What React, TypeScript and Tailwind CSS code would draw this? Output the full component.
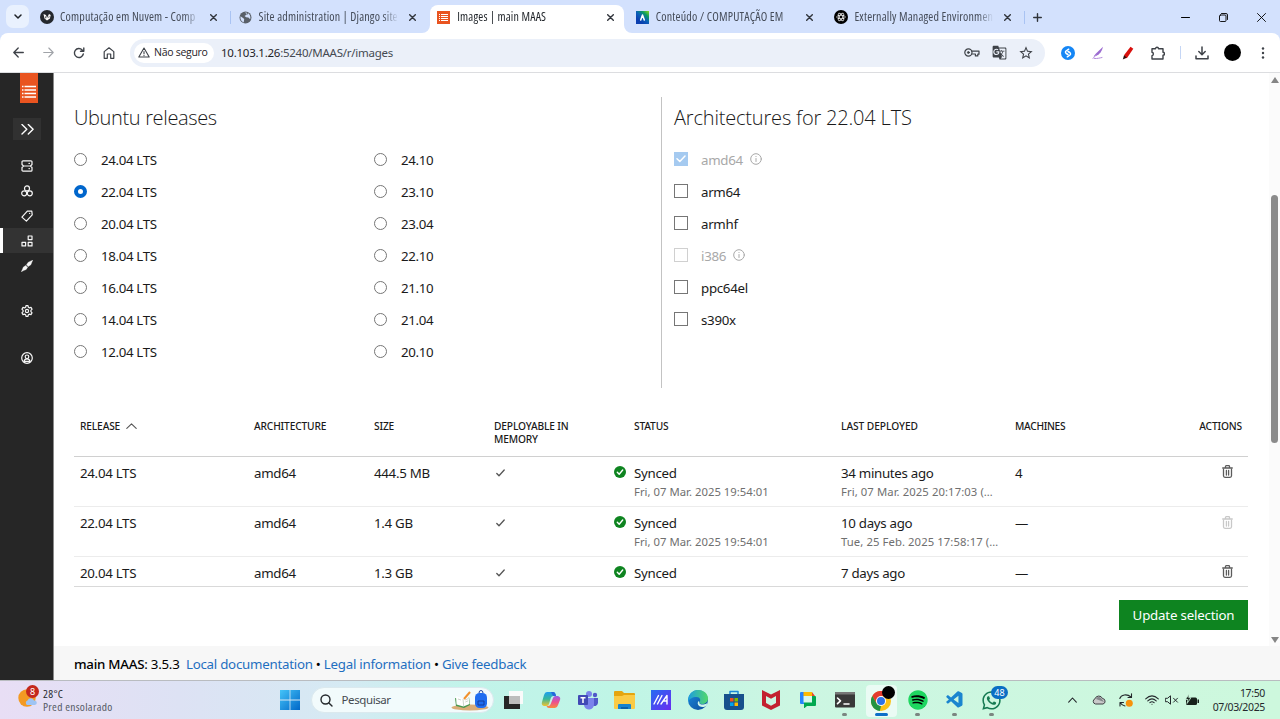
import React from "react";
import { FaSpotify, FaWhatsapp } from "react-icons/fa";
import { VscVscode } from "react-icons/vsc";
import { MdGTranslate, MdStarOutline } from "react-icons/md";

const ui = "font-['Noto_Sans',sans-serif]";
const stroke = { fill: "none", stroke: "currentColor", strokeLinecap: "round", strokeLinejoin: "round" } as const;

function Close() {
  return (
    <svg className="h-[7px] w-[7px] shrink-0 text-[#30343b]" viewBox="0 0 7 7" {...stroke} strokeWidth="1.4">
      <path d="M.7.7l5.6 5.6M6.3.7L.7 6.3" />
    </svg>
  );
}

function MaasMark() {
  return (
    <svg className="h-[13px] w-[13px]" viewBox="0 0 13 13">
      <path fill="#e95420" d="M0 0h13v13H0z" />
      <path stroke="#fff" strokeWidth="1" d="M2 3.5h1M4 3.5h7M2 5.5h1M4 5.5h7M2 7.5h1M4 7.5h7M2 9.5h1M4 9.5h7" />
    </svg>
  );
}

const favicons = [
  <svg className="h-[14px] w-[14px]" viewBox="0 0 14 14">
    <circle cx="7" cy="7" r="7" fill="#24282e" />
    <path fill="#fff" d="M3.500 4l2.500 1 1 3 2-4 1.700 1-.8 3.500L7 10.500 4.500 8.500z" />
    <path fill="#24282e" d="M5 5.500l1.500 2.500-1 .5zM9 6l.7 1-1.500 1z" />
  </svg>,
  <svg className="h-[13px] w-[13px]" viewBox="0 0 13 13">
    <circle cx="6.5" cy="6.5" r="6" fill="#596069" />
    <path fill="#d3e1fd" d="M1.5 5.2L4 7l1.2 1-.5 3.4C2.500 10.500 1 8.500 1.500 5.200zM6 1.500l2 .3-.6 1.900L5.600 5l1.500 1.300 2.200.200 1.900 1.700c.7-2.500-.4-5-2.500-6.200L9 3.600 7.500 3z" />
  </svg>,
  <MaasMark />,
  <svg className="h-[13px] w-[13px]" viewBox="0 0 13 13">
    <defs>
      <linearGradient id="av" x1="1" y1="0" x2="0.3" y2="0.8">
        <stop offset="0" stopColor="#8ddc1c" />
        <stop offset=".35" stopColor="#0b9a63" />
        <stop offset=".65" stopColor="#0a60b8" />
        <stop offset="1" stopColor="#0b3fb0" />
      </linearGradient>
    </defs>
    <path fill="url(#av)" d="M0 0h13v13H0z" />
    <path {...stroke} stroke="#fff" strokeWidth="1.500" d="M4.700 9l1.800-5 1.800 5" />
  </svg>,
  <svg className="h-[14px] w-[14px]" viewBox="0 0 14 14">
    <circle cx="7" cy="7" r="7" fill="#000" />
    <g fill="none" stroke="#fff" strokeWidth=".7">
      <ellipse cx="7" cy="7" rx="4.400" ry="1.800" />
      <ellipse cx="7" cy="7" rx="4.400" ry="1.800" transform="rotate(60 7 7)" />
      <ellipse cx="7" cy="7" rx="4.400" ry="1.800" transform="rotate(120 7 7)" />
    </g>
  </svg>,
];

const tabs = [
  "Computação em Nuvem - Comp",
  "Site administration | Django site",
  "Images | main MAAS",
  "Conteúdo / COMPUTAÇÃO EM",
  "Externally Managed Environmen",
];

function TabBar() {
  return (
    <div className="flex h-[33px] bg-[#d3e1fd]">
      <div className="flex w-[32px] shrink-0 items-center pl-[6px]">
        <div className="flex h-[23px] w-[23px] items-center justify-center rounded-[7px] bg-[#e9f1fe]">
          <svg className="h-[5px] w-[8px] text-[#1f2328]" viewBox="0 0 8 5" {...stroke} strokeWidth="1.500">
            <path d="M1 1l3 3 3-3" />
          </svg>
        </div>
      </div>
      {tabs.map((t, i) => (
        <div key={t} className="relative flex w-[198.6px] shrink-0 items-center pt-[1px]">
          {i === 2 && (
            <div className="absolute top-[5px] left-[-7px] flex h-[28px] w-[210px] items-end">
              <svg className="h-[8px] w-[8px] shrink-0" viewBox="0 0 8 8"><path fill="#fff" d="M8 0v8H0a8 8 0 0 0 8-8z" /></svg>
              <div className="h-full flex-1 rounded-t-[8px] bg-white" />
              <svg className="h-[8px] w-[8px] shrink-0" viewBox="0 0 8 8"><path fill="#fff" d="M0 0v8h8a8 8 0 0 1-8-8z" /></svg>
            </div>
          )}
          <div className="relative flex w-full items-center pl-[8px]">
            <span className="flex w-[20px] shrink-0">{favicons[i]}</span>
            <span
              className={
                "w-[141px] shrink-0 font-['Open_Sans',sans-serif] text-[12px] leading-[16px] tracking-[0.18px] whitespace-nowrap [font-stretch:86%] [mask-image:linear-gradient(to_right,black_88%,transparent_99%)] " +
                (i === 2 ? "text-[#1f2328]" : "text-[#454c59]")
              }
            >
              {t}
            </span>
            <span className="ml-[9px] flex"><Close /></span>
            {(i === 0 || i === 4) && <span className="ml-auto h-[13px] w-[1px] bg-[#a9c3f3]" />}
          </div>
        </div>
      ))}
      <div className="flex flex-1 items-center justify-between pt-[1px] pr-[14px] pl-[8px] text-[#30343b]">
        <svg className="h-[9px] w-[9px]" viewBox="0 0 9 9" {...stroke} strokeWidth="1.400"><path d="M4.500.7v7.600M.7 4.500h7.600" /></svg>
        <div className="flex items-center gap-[29px] text-black">
          <svg className="h-[9px] w-[9px]" viewBox="0 0 9 9" {...stroke} strokeWidth="1"><path d="M.5 4.500h8" /></svg>
          <svg className="h-[9px] w-[9px]" viewBox="0 0 9 9" {...stroke} strokeWidth=".9"><rect x=".5" y="2" width="6.500" height="6.500" rx="1" /><path d="M2.500.5h4.500a1.500 1.500 0 0 1 1.500 1.500v4.500" /></svg>
          <svg className="h-[9px] w-[9px]" viewBox="0 0 9 9" {...stroke} strokeWidth=".9"><path d="M.5.5l8 8M8.500.5l-8 8" /></svg>
        </div>
      </div>
    </div>
  );
}

function Toolbar() {
  return (
    <div className="bg-[#d3e1fd]">
      <div className="flex h-[40px] items-center rounded-t-[8px] border-b border-[#dcdde0] bg-white pl-[13px] text-[#3e4248]">
        <svg className="h-[11px] w-[11px]" viewBox="0 0 11 11" {...stroke} strokeWidth="1.300"><path d="M10.300 5.500H1M5.200 1L.8 5.500l4.400 4.500" /></svg>
        <svg className="ml-[19px] h-[11px] w-[11px] text-[#a0a3a8]" viewBox="0 0 11 11" {...stroke} strokeWidth="1.100"><path d="M.7 5.500H10M5.800 1l4.400 4.500L5.800 10" /></svg>
        <svg className="ml-[19px] h-[12px] w-[12px]" viewBox="0 0 12 12" {...stroke} strokeWidth="1.400"><path d="M10.300 7A4.500 4.500 0 1 1 9.200 2.900l1.300 1.300M10.800 1v3.300H7.500" /></svg>
        <svg className="ml-[18px] h-[12px] w-[12px]" viewBox="0 0 12 12" {...stroke} strokeWidth="1.200"><path d="M1.200 11.300V4.600L6 .8l4.800 3.800v6.700H7.700V7H4.300v4.300z" /></svg>
        <div className="ml-[15px] flex h-[28px] w-[915px] shrink-0 items-center rounded-full bg-[#ebf0f9] pr-[12px] pl-[4px]">
          <div className="flex h-[20px] w-[80px] items-center rounded-full bg-white pl-[4px]">
            <svg className="h-[11px] w-[12px] shrink-0" viewBox="0 0 12 11" {...stroke} strokeWidth="1.100"><path d="M6 1l5.200 9H.8zM6 4.500v2.300M6 8.300v.3" /></svg>
            <span className="ml-[4px] pt-px font-['Open_Sans',sans-serif] text-[10.500px] font-medium tracking-[-0.28px] whitespace-nowrap text-[#1f2328]">Não seguro</span>
          </div>
          <span className="ml-[7px] pt-px text-[11.500px] tracking-[-0.250px] whitespace-nowrap text-[#454a52]"><span className="text-[#1f2328]">10.103.1.26</span>:5240/MAAS/r/images</span>
          <div className="ml-auto flex items-center gap-[11px]">
            <svg className="mr-[1px] h-[9px] w-[16px]" viewBox="0 0 16 9" {...stroke} strokeWidth="1.200"><circle cx="4.400" cy="4.500" r="3.600" /><circle cx="4.400" cy="4.500" r="1" fill="currentColor" strokeWidth=".8" /><path d="M7.800 3.200H15v3h-1.200v1.700h-2.400V6H7.800" /></svg>
            <MdGTranslate className="h-[15px] w-[15px]" />
            <MdStarOutline className="h-[16px] w-[16px] -mr-[1px]" />
          </div>
        </div>
        <svg className="ml-[16px] h-[14px] w-[14px] shrink-0" viewBox="0 0 14 14"><circle cx="7" cy="7" r="7" fill="#1586f5" /><path {...stroke} stroke="#fff" strokeWidth="1.500" d="M7.700 3.200L5 5a1.600 1.600 0 0 0 .2 2.500L7 8.500M6.300 10.800L9 9a1.600 1.600 0 0 0-.2-2.500L7 5.500" /></svg>
        <svg className="ml-[17px] h-[14px] w-[12px] shrink-0" viewBox="0 0 12 14"><path fill="#9b6bd0" d="M11 .8L4 7.500l-2.500 3 3-.8C8 8 10 5 11 .8z" /><path {...stroke} stroke="#b38adc" strokeWidth="1" d="M1 12.500l3-3.500M2.500 12.500c3 .2 5-.5 7.500-1" /></svg>
        <svg className="ml-[18px] h-[14px] w-[12px] shrink-0" viewBox="0 0 12 14"><path fill="#d9100d" d="M8.500.8l2.800 2L5 12l-3 .5.200-3.500z" /><path fill="#251010" d="M2 9.300l2.700 2.200L.8 13.500z" /></svg>
        <svg className="ml-[17px] h-[14px] w-[14px] shrink-0" viewBox="0 0 14 14" {...stroke} strokeWidth="1.400"><path d="M1 2.800h3.500a1.500 1.500 0 0 1 3 0H12v3.500a1.500 1.500 0 0 1 0 3V13H1V9.700a1.800 1.800 0 0 0 0-3.500z" /></svg>
        <span className="ml-[15px] h-[13px] w-[1px] bg-[#c5d6f5]" />
        <svg className="ml-[14px] h-[14px] w-[14px] shrink-0" viewBox="0 0 14 14" {...stroke} strokeWidth="1.500"><path d="M7 1v7.500M3.800 5.500L7 8.700l3.200-3.200M1 10v2.700h12V10" /></svg>
        <span className="ml-[15px] h-[17px] w-[17px] shrink-0 rounded-full bg-black" />
        <svg className="ml-[20px] h-[12px] w-[4px] shrink-0" viewBox="0 0 4 12" fill="currentColor"><circle cx="2" cy="1.500" r="1.200" /><circle cx="2" cy="6" r="1.200" /><circle cx="2" cy="10.500" r="1.200" /></svg>
      </div>
    </div>
  );
}

const navIcons = [
  <path key="a" d="M2 .8h8a1 1 0 0 1 1 1v2.700L9.500 6H2.500L1 4.500V1.800a1 1 0 0 1 1-1zM2.500 6h7L11 7.500v2.700a1 1 0 0 1-1 1H2a1 1 0 0 1-1-1V7.500zM8 3.400h.4M8 8.600h.4" />,
  <g key="b"><circle cx="6" cy="3.400" r="2.500" /><circle cx="3.200" cy="8.300" r="2.500" /><circle cx="8.800" cy="8.300" r="2.500" /></g>,
  <path key="c" d="M6.300 1.200L10.800 1l.4 3.800-5.800 6.300L.9 7.100zM8.600 3.400h.1" />,
  <path key="d" d="M7.200 1h3.800v3.600H7.200zM1 7.300h3.600v3.600H1zM7.200 7.300h3.800v3.600H7.200z" />,
  <path key="e" fill="currentColor" d="M11.700.3L9.500 1.200 7 2.500 5.600 4.700l1.800 1.700 2.400-1.600 1-2.600zM4.800 5.500L2.400 7.100 1.400 9.500.3 11.700l2.200-1.100L5.200 9.400l1.400-2.200z" strokeWidth=".4" />,
];

function SideIcon({ children }: { children: React.ReactNode }) {
  return (
    <svg className="h-[12px] w-[12px] text-[#f7f7f7]" viewBox="0 0 12 12" {...stroke} strokeWidth="1.200">{children}</svg>
  );
}

function Sidebar() {
  return (
    <div className="flex w-[54px] shrink-0 flex-col border-r border-[#8a8a8a] bg-[#262626]">
      <div className="ml-[20px] flex h-[30px] w-[18px] items-end justify-center bg-[#e95420] pb-[4px]">
        <svg className="h-[14px] w-[14px]" viewBox="0 0 14 14"><path stroke="#fff" strokeWidth="1.500" d="M0 1.500h1.500M2.500 1.500H14M0 5h1.500M2.500 5H14M0 8.500h1.500M2.500 8.500H14M0 12h1.500M2.500 12H14" /></svg>
      </div>
      <div className="mt-[15px] ml-[13px] flex h-[22px] w-[28px] items-center justify-center bg-[#313131]">
        <svg className="h-[11px] w-[13px] text-white" viewBox="0 0 13 11" {...stroke} strokeWidth="1.400"><path d="M1 .5l4.800 4.700L1 9.900M7.300.5l4.800 4.700-4.800 4.700" /></svg>
      </div>
      <div className="mt-[13px]">
        {navIcons.map((ic, i) => (
          <div key={i} className={i === 3 ? "flex h-[25px] items-center border-l-[3px] border-white bg-[#333] pl-[18px]" : "flex h-[25px] items-center pl-[21px]"}>
            <SideIcon>{ic}</SideIcon>
          </div>
        ))}
      </div>
      <div className="mt-[27px] pl-[21px]">
        <SideIcon>
          <circle cx="6" cy="6" r="1.600" />
          <path d="M4.600 2.300L5 .7h2l.4 1.600 1 .6L10 2.400l1.100 1.800-1.200 1.200v1.200l1.200 1.200L10 9.600l-1.600-.5-1 .6L7 11.300H5l-.4-1.600-1-.6L2 9.600.9 7.800l1.200-1.200V5.400L.9 4.200 2 2.400l1.600.5z" />
        </SideIcon>
      </div>
      <div className="mt-[35px] pl-[21px]">
        <SideIcon><circle cx="6" cy="6" r="5.300" /><circle cx="6" cy="4.800" r="1.800" /><path d="M3 9.300c.3-1.600 1.500-2.500 3-2.500s2.700.9 3 2.500z" /></SideIcon>
      </div>
    </div>
  );
}

const leftReleases = ["24.04 LTS", "22.04 LTS", "20.04 LTS", "18.04 LTS", "16.04 LTS", "14.04 LTS", "12.04 LTS"];
const rightReleases = ["24.10", "23.10", "23.04", "22.10", "21.10", "21.04", "20.10"];

function Radio({ label }: { label: string }) {
  return (
    <div className="flex h-[32px] items-center">
      <span className={label === "22.04 LTS" ? "h-[13px] w-[13px] rounded-full border-[4px] border-[#0066cc] bg-white" : "h-[13px] w-[13px] rounded-full border border-[#767676] bg-white"} />
      <span className="ml-[14px] pt-[3px] text-[13.300px] tracking-[-0.35px]">{label}</span>
    </div>
  );
}

function Info() {
  return (
    <svg className="ml-[7px] h-[12px] w-[12px]" viewBox="0 0 12 12" {...stroke} strokeWidth="1"><circle cx="6" cy="6" r="5.300" /><path d="M6 5.500v3M6 3.400v.1" /></svg>
  );
}

function Arch({ label }: { label: string }) {
  const disabled = label === "amd64" || label === "i386";
  return (
    <div className={disabled ? "flex h-[32px] items-center text-[#a8a8a8]" : "flex h-[32px] items-center"}>
      {label === "amd64" ? (
        <span className="flex h-[14px] w-[14px] items-center justify-center bg-[#a5caf0]">
          <svg className="h-[8px] w-[10px] text-white" viewBox="0 0 10 8" {...stroke} strokeWidth="1.500"><path d="M1 3.800L3.800 6.500 9 1" /></svg>
        </span>
      ) : (
        <span className={disabled ? "h-[14px] w-[14px] border border-[#d0d0d0]" : "h-[14px] w-[14px] border border-[#767676]"} />
      )}
      <span className="ml-[13px] pt-[3px] text-[13.300px] tracking-[-0.3px]">{label}</span>
      {disabled && <Info />}
    </div>
  );
}

const cols = "grid grid-cols-[174px_120px_120px_140px_207px_174px_1fr_auto] pl-[6px]";

function Check() {
  return <svg className="mt-[6.500px] ml-[2px] h-[8px] w-[9px] text-[#555]" viewBox="0 0 9 8" {...stroke} strokeWidth="1.300"><path d="M.8 4.500L3 6.800 8.200 1" /></svg>;
}

function Trash() {
  return (
    <svg className="h-[13px] w-[11px]" viewBox="0 0 11 13" {...stroke} strokeWidth="1.300"><path d="M.7 3h9.600M3.500 3V1.500q0-.8.8-.8h2.400q.8 0 .8.800V3M1.500 4.500v6.300q0 1.500 1.500 1.500h5q1.500 0 1.500-1.500V4.500M4.400 5.500v4.500M6.600 5.500v4.500" /></svg>
  );
}

const rows = [
  { r: "24.04 LTS", s: "444.5 MB", d: "34 minutes ago", dd: "Fri, 07 Mar. 2025 20:17:03 (…", m: "4" },
  { r: "22.04 LTS", s: "1.4 GB", d: "10 days ago", dd: "Tue, 25 Feb. 2025 17:58:17 (…", m: "—" },
  { r: "20.04 LTS", s: "1.3 GB", d: "7 days ago", dd: "", m: "—" },
];

function ImagesTable() {
  return (
    <div className="h-[199px] overflow-hidden border-b border-[#d9d9d9] text-[13.300px] leading-[20px]">
      <div className={cols + " h-[69px] border-b border-[#d0d0d0] pt-[32px] text-[10.200px] leading-[13.300px] font-medium tracking-[-0.15px]"}>
        <span className="flex gap-[6px]">RELEASE<svg className="mt-[3px] h-[6px] w-[11px] text-[#555]" viewBox="0 0 11 6" {...stroke} strokeWidth="1.100"><path d="M.8 5.400L5.500.8l4.700 4.600" /></svg></span>
        <span>ARCHITECTURE</span>
        <span>SIZE</span>
        <span>DEPLOYABLE IN<br />MEMORY</span>
        <span>STATUS</span>
        <span className="tracking-[-0.05px]">LAST DEPLOYED</span>
        <span className="tracking-[-0.3px]">MACHINES</span>
        <span className="pr-[6px]">ACTIONS</span>
      </div>
      {rows.map((x, i) => (
        <div key={x.r} className={cols + " h-[50px] border-b border-[#ececec] pt-[5.500px] tracking-[-0.3px]"}>
          <span>{x.r}</span>
          <span>amd64</span>
          <span>{x.s}</span>
          <span><Check /></span>
          <div className="-ml-[20px] flex">
            <svg className="mt-[3.500px] mr-[8px] h-[12px] w-[12px] shrink-0" viewBox="0 0 12 12"><circle cx="6" cy="6" r="6" fill="#0e8420" /><path {...stroke} stroke="#fff" strokeWidth="1.400" d="M3.300 6.300l1.900 1.900 3.500-4.200" /></svg>
            <div>
              <div>Synced</div>
              <div className="text-[11.300px] leading-[18px] tracking-[0.02px] whitespace-nowrap text-[#6f6f6f]">{i < 2 && "Fri, 07 Mar. 2025 19:54:01"}</div>
            </div>
          </div>
          <div>
            <div>{x.d}</div>
            <div className="text-[11.300px] leading-[18px] tracking-[0.080px] whitespace-nowrap text-[#6f6f6f]">{x.dd}</div>
          </div>
          <span>{x.m}</span>
          <span className={i === 1 ? "pt-[3px] pr-[15px] text-[#c8c8c8]" : "pt-[2.500px] pr-[15px] text-[#5c5c5c]"}><Trash /></span>
        </div>
      ))}
    </div>
  );
}

function Page() {
  return (
    <div className="flex min-h-0 flex-1 bg-white">
      <Sidebar />
      <div className="flex flex-1 flex-col">
        <div className="flex h-[573px]">
          <div className="flex-1 pr-[21px] pl-[20px] text-[#1a1a1a]">
            <div className="flex pt-[24px]">
              <div className="h-[291px] w-[588px] border-r border-[#c3c3c3]">
                <h2 className="h-[46px] font-['Open_Sans',sans-serif] text-[20px] leading-[42px] font-light tracking-[-0.35px]">Ubuntu releases</h2>
                <div className="grid grid-cols-[300px_1fr]">
                  <div>{leftReleases.map((l) => <Radio key={l} label={l} />)}</div>
                  <div>{rightReleases.map((l) => <Radio key={l} label={l} />)}</div>
                </div>
              </div>
              <div className="pl-[12px]">
                <h2 className="h-[46px] font-['Open_Sans',sans-serif] text-[20px] leading-[42px] font-light tracking-[-0.18px]">Architectures for 22.04 LTS</h2>
                {["amd64", "arm64", "armhf", "i386", "ppc64el", "s390x"].map((l) => <Arch key={l} label={l} />)}
              </div>
            </div>
            <ImagesTable />
            <div className="flex justify-end pt-[13px]">
              <button className="h-[30px] w-[129px] bg-[#0e8420] pt-[2px] text-[13.300px] tracking-[-0.2px] whitespace-nowrap text-white">Update selection</button>
            </div>
          </div>
          <div className="flex w-[11px] flex-col items-center bg-[#fbfbfb] pt-[4px] pb-[3px]">
            <svg className="h-[6px] w-[8px]" viewBox="0 0 8 6"><path fill="#858585" d="M4 0l4 6H0z" /></svg>
            <div className="mt-[112px] h-[248px] w-[7px] rounded-full bg-[#8b8b8b]" />
            <svg className="mt-auto h-[6px] w-[8px]" viewBox="0 0 8 6"><path fill="#858585" d="M0 0h8L4 6z" /></svg>
          </div>
        </div>
        <div className="flex flex-1 items-center bg-[#f7f7f7] pt-[3px] pl-[20px] text-[13.300px] tracking-[-0.25px] whitespace-pre text-black">
          <span className="font-medium">main MAAS</span>: 3.5.3  <span className="text-[#1f6fc0]">Local documentation</span> • <span className="text-[#1f6fc0]">Legal information</span> • <span className="text-[#1f6fc0]">Give feedback</span>
        </div>
      </div>
    </div>
  );
}

const apps: { icon: React.ReactNode; dot?: boolean; active?: boolean }[] = [
  { icon: <svg className="h-[20px] w-[20px]" viewBox="0 0 20 20"><path fill="#fafafa" d="M5 1h14v13H5z" /><path fill="#262626" d="M0 6h16v13H0z" /><path fill="#bdbdbd" d="M5 6h11v8H5z" /></svg> },
  {
    icon: (
      <svg className="h-[20px] w-[20px]" viewBox="0 0 20 20">
        <defs>
          <linearGradient id="cp1" x1="0" y1="0" x2="0" y2="1"><stop offset="0" stopColor="#1f9cf0" /><stop offset=".5" stopColor="#38b89a" /><stop offset="1" stopColor="#f2c12e" /></linearGradient>
          <linearGradient id="cp2" x1="0" y1="0" x2="0" y2="1"><stop offset="0" stopColor="#9b5de5" /><stop offset=".5" stopColor="#ec4f8f" /><stop offset="1" stopColor="#fa8b3c" /></linearGradient>
        </defs>
        <path fill="url(#cp1)" d="M6 2h6q2 0 2.500 2l.5 2h-2.500q-2 0-2.700 2L8 14q-.7 2-2.500 2H3q-3-1-2-4l2-7q.8-3 3-3z" />
        <path fill="url(#cp2)" d="M14 18H8q-2 0-2.500-2H7q2 0 2.700-2L12 8q.7-2 2.500-2H17q3 1 2 4l-2 5q-.8 3-3 3z" />
        <path fill="#2468dc" d="M10 2h2q2 0 2.500 2l.5 2h-3z" />
      </svg>
    ),
  },
  { icon: <svg className="h-[20px] w-[20px]" viewBox="0 0 20 20"><circle cx="11" cy="4" r="3" fill="#7b83eb" /><circle cx="17" cy="5" r="2.200" fill="#5059c9" /><path fill="#5059c9" d="M14 8h6v5a3.500 3.500 0 0 1-6 2z" /><path fill="#7b83eb" d="M6 8h10v6a5 5 0 0 1-10 1z" /><rect y="5" width="10" height="10" rx="1" fill="#4149b5" /><path stroke="#fff" strokeWidth="1.500" d="M2.500 7.700h5M5 7.700V13" /></svg> },
  { icon: <svg className="h-[20px] w-[21px]" viewBox="0 0 21 20"><path fill="#e5a50f" d="M0 2q0-1 1-1h7l2 2h10q1 0 1 1v4H0z" /><path fill="#fbcb45" d="M0 6h8l2-1h11v13q0 1-1 1H1q-1 0-1-1z" /><path fill="#1583d0" d="M4 19v-4q0-1 1-1h11q1 0 1 1v4z" /><path fill="#0b61a8" d="M7 17h7v2H7z" /></svg> },
  { icon: <svg className="h-[20px] w-[20px]" viewBox="0 0 20 20"><defs><linearGradient id="ma" x1="0" y1="0" x2="1" y2="1"><stop offset="0" stopColor="#256cf2" /><stop offset="1" stopColor="#6a2cf0" /></linearGradient></defs><path fill="url(#ma)" d="M0 0h20v20H0z" /><path {...stroke} stroke="#fff" strokeWidth="1.400" d="M3 14L7.500 5.500M6.500 14L11 5.500M10 14l6-8.500V14M13 11h3" /></svg> },
  {
    icon: (
      <svg className="h-[20px] w-[20px]" viewBox="0 0 20 20">
        <defs>
          <linearGradient id="e1" x1="0" y1="0" x2="1" y2="0"><stop offset="0" stopColor="#1c9de0" /><stop offset="1" stopColor="#52d86a" /></linearGradient>
          <linearGradient id="e2" x1="0" y1="0" x2="1" y2="1"><stop offset="0" stopColor="#1a8be0" /><stop offset="1" stopColor="#0c4a98" /></linearGradient>
        </defs>
        <circle cx="10" cy="10" r="10" fill="url(#e2)" />
        <path fill="url(#e1)" d="M.3 8C2 2.500 6 0 10 0c6 0 10 4 10 8.500C20 12 17 14 14 14c-2 0-3-1-2.500-2 1.500-1.500.8-5-3-5C4.500 7 1 9 0 12z" />
        <path fill="#d0f6ea" d="M11.300 12c-.5 2 2 2.700 4 2.500 1.800-.1 3-.8 4.200-1.700l-1 3c-2 1.500-5 1.700-7 .5-2.200-1.400-2.300-4-.8-5.300z" />
      </svg>
    ),
  },
  { icon: <svg className="h-[20px] w-[20px]" viewBox="0 0 20 20"><path {...stroke} stroke="#1c88d6" strokeWidth="1.500" d="M6 5V1.500h8V5" /><path fill="#17508c" d="M0 4h20v13q0 3-3 3H3q-3 0-3-3z" /><path fill="#f25022" d="M6 8h3.500v3.500H6z" /><path fill="#7fba00" d="M10.500 8H14v3.500h-3.500z" /><path fill="#00a4ef" d="M6 12.500h3.500V16H6z" /><path fill="#ffb900" d="M10.500 12.500H14V16h-3.500z" /></svg> },
  { icon: <svg className="h-[20px] w-[18px]" viewBox="0 0 18 20"><path fill="#c3202f" d="M0 0l9 4.500L18 0v15.500L9 20l-9-4.500zM4 6v7l5 2.700 5-2.700V6L9 8.700z" fillRule="evenodd" /></svg> },
  { icon: <svg className="h-[16px] w-[16px]" viewBox="0 0 16 16"><path fill="#2684fc" d="M1 0h3v12H1q-1 0-1-1V1q0-1 1-1z" /><path fill="#ffba00" d="M3.500 0H12v4H3.500z" /><path fill="#ea4335" d="M12 0v4h3z" /><path fill="#00a84f" d="M12 4h3q1 0 1 1v8q0 1-1 1H7l-3 2.500V10h8z" /><path fill="#d9f7ec" d="M3.500 4H12v6.500H3.500z" /></svg> },
  { icon: <svg className="h-[16px] w-[20px]" viewBox="0 0 20 16"><rect width="20" height="15.500" rx="1" fill="#393939" /><path fill="#777" d="M1 0h18q1 0 1 1v1.500H0V1q0-1 1-1z" /><path {...stroke} stroke="#fff" strokeWidth="1.600" d="M2.500 6l3 2.800-3 2.800M9 12h5" /></svg>, dot: true },
  {
    icon: (
      <svg className="h-[20px] w-[20px]" viewBox="0 0 20 20">
        <circle cx="10" cy="10" r="10" fill="#fbc116" />
        <path fill="#e33b2e" d="M1.300 5A10 10 0 0 1 18.700 5H10L5.700 12.500z" />
        <path fill="#229342" d="M1.300 5l4.400 7.500L10 15l-1.200 5A10 10 0 0 1 1.300 5z" />
        <circle cx="10" cy="10" r="5" fill="#fff" /><circle cx="10" cy="10" r="4" fill="#2c72e8" />
      </svg>
    ),
    dot: true,
    active: true,
  },
  { icon: <span className="relative flex"><span className="absolute inset-[3px] bg-black" /><FaSpotify className="relative h-[20px] w-[20px] text-[#1ed760]" /></span>, dot: true },
  { icon: <VscVscode className="h-[20px] w-[20px] text-[#1b85cf]" />, dot: true },
  { icon: <FaWhatsapp className="h-[21px] w-[21px] text-[#157a52]" />, dot: true },
];

function Taskbar() {
  return (
    <div className="flex h-[39px] shrink-0 border-t border-[#b9bcc0] bg-[linear-gradient(to_right,#e8def5_0%,#dde2f4_14%,#d5eaf3_27%,#c2f3ea_36%,#bff5e6_48%,#ccf6e2_62%,#cdf8dd_100%)] text-[#24282c]">
      <div className="flex w-[279px] shrink-0 pl-[18px]">
        <div className="relative w-[25px] pt-[8px]">
          <svg className="h-[18px] w-[20px]" viewBox="0 0 20 18"><circle cx="9" cy="9" r="8.700" fill="#f39a23" /><path fill="#9fc4f3" d="M9 16a2.500 2.500 0 0 1 .5-4.500 3.500 3.500 0 0 1 6.500 0 2.300 2.300 0 0 1 1 4.500z" /></svg>
          <span className="absolute top-[4px] left-[8px] flex h-[13px] w-[13px] items-center justify-center rounded-full bg-[#c4281c] text-[9px] text-white">8</span>
        </div>
        <div className="pt-[5.500px] font-['Open_Sans',sans-serif] text-[11.500px] leading-[13.300px] tracking-[0.3px] whitespace-nowrap [font-stretch:86%]"><div>28°C</div><div className="text-[#565b66]">Pred ensolarado</div></div>
      </div>
      <div className="flex w-[32px] shrink-0 pt-[9px] pl-[1px]">
        <svg className="h-[20px] w-[20px]" viewBox="0 0 20 20"><defs><linearGradient id="w" x1="0" y1="0" x2="1" y2="1"><stop offset="0" stopColor="#45c4f8" /><stop offset="1" stopColor="#0067c8" /></linearGradient></defs><path fill="url(#w)" d="M0 0h9.600v9.600H0zM10.400 0H20v9.600h-9.600zM0 10.400h9.600V20H0zM10.400 10.400H20V20h-9.600z" /></svg>
      </div>
      <div className="mt-[6px] flex h-[26px] w-[183px] shrink-0 items-center rounded-full border border-[#dbe9ee] bg-[#f2fbfc] pr-[4px] pl-[8px]">
        <svg className="h-[13px] w-[13px]" viewBox="0 0 13 13" {...stroke} strokeWidth="1.400"><circle cx="5.500" cy="5.500" r="4.500" /><path d="M8.900 8.900L12 12" /></svg>
        <span className="ml-[8.500px] text-[11.500px] tracking-[-0.4px] text-[#454a50]">Pesquisar</span>
        <svg className="ml-auto h-[21px] w-[38px]" viewBox="0 0 38 21">
          <ellipse cx="19" cy="17.500" rx="18.500" ry="3" fill="#d9ac77" />
          <path fill="#49974f" d="M4 8l8 2 6-3 1 8-6 3-8-2z" /><path fill="#fff" d="M5 6l7 2.500L17.500 6l1 8-6 2.500-7-2z" /><path stroke="#a9b7a9" strokeWidth=".6" d="M12 9l.7 7M14 10l3-1.300M14.300 12l3-1.300M7 9l3 1" />
          <path stroke="#f0922d" strokeWidth="2" d="M13 9l6-7" />
          <rect x="24" y="3" width="12" height="15" rx="4.500" fill="#1f6df0" /><path fill="none" stroke="#173f9c" strokeWidth="1" d="M28 3q0-2.500 2-2.500T32 3M27 11h6v4h-6z" />
        </svg>
      </div>
      <div className="ml-[2px] flex shrink-0">
        {apps.map((a, i) => (
          <div key={i} className="relative flex w-[36.7px] justify-center pt-[4px]">
            <div className={a.active ? "flex h-[32px] w-[31px] items-center justify-center rounded-[4px] bg-[#eafbf4]" : "flex h-[30px] w-[31px] items-center justify-center"}>{a.icon}</div>
            {a.dot && <span className={a.active ? "absolute bottom-[3px] h-[3px] w-[13px] rounded-full bg-[#0d6fc8]" : "absolute bottom-[3px] h-[3px] w-[5px] rounded-full bg-[#7b8580]"} />}
            {a.active && <span className="absolute top-[5px] left-[19.500px] h-[13px] w-[13px] rounded-full bg-black" />}
            {i === 13 && <span className="absolute top-[5px] left-[18px] flex h-[13px] w-[17px] items-center justify-center rounded-full bg-[#0a6fc4] text-[9px] text-white">48</span>}
          </div>
        ))}
      </div>
      <div className="flex flex-1 items-center justify-end pr-[15px]">
        <svg className="h-[6px] w-[9px]" viewBox="0 0 9 6" {...stroke} strokeWidth="1.100"><path d="M.7 5.200L4.500 1l3.800 4.200" /></svg>
        <svg className="ml-[15px] h-[10px] w-[14px]" viewBox="0 0 14 10"><path fill="#c9c9c9" stroke="#3e4145" strokeWidth="1" d="M3.500 9a2.700 2.700 0 0 1-.5-5.200 4 4 0 0 1 7.500-.3A2.800 2.800 0 0 1 11 9z" /><path fill="#85888c" d="M4 4a3 3 0 0 1 5.500-.5L12 7z" /></svg>
        <svg className="ml-[13px] h-[14px] w-[14px]" viewBox="0 0 14 14" {...stroke} strokeWidth="1.100"><path d="M.8 5.500C2 1.500 8 .5 12 4M12.500.8V4.500H9M1 13V9.500h3.500M1.500 10Q3 12.500 6 13" /><circle cx="10.300" cy="10.300" r="3.500" fill="#f7920b" stroke="none" /></svg>
        <svg className="ml-[12px] h-[10px] w-[14px]" viewBox="0 0 14 10" {...stroke} strokeWidth="1.100"><path d="M.7 3.800q6.300-6 12.600 0M2.800 5.900q4.200-4 8.400 0M4.900 7.700q2.100-1.800 4.200 0M7 9.200v.1" /></svg>
        <svg className="ml-[6px] h-[10px] w-[14px]" viewBox="0 0 14 10" {...stroke} strokeWidth="1"><path d="M.7 3.300H2.500L5.500.8v8.400L2.500 6.700H.7zM8.500 3.200l4 4M12.500 3.200l-4 4" /></svg>
        <svg className="ml-[6px] h-[12px] w-[14px]" viewBox="0 0 14 12"><rect x="1" y="3.500" width="11" height="7.500" rx="1.500" fill="#17211b" /><path fill="#17211b" d="M12.500 5.500H14V9h-1.500z" /><path fill="#17211b" stroke="#cdf8dd" strokeWidth=".8" d="M4 0L.5 5.500H3L2 9.500l4-5.800H3.800z" /></svg>
        <div className="ml-[12px] w-[54px] pt-[1px] text-right text-[10.500px] leading-[13.300px] tracking-[-0.35px] whitespace-nowrap"><div>17:50</div><div>07/03/2025</div></div>
      </div>
    </div>
  );
}

export default function App() {
  return (
    <div className={ui + " flex h-[719px] w-[1280px] flex-col overflow-hidden bg-white"}>
      <TabBar />
      <Toolbar />
      <Page />
      <Taskbar />
    </div>
  );
}
